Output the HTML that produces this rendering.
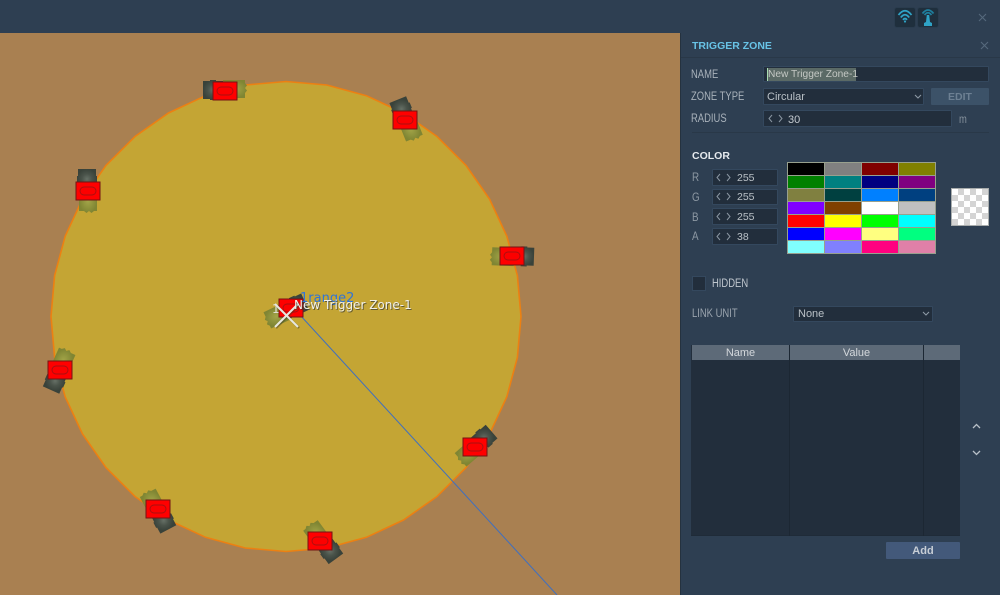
<!DOCTYPE html>
<html>
<head>
<meta charset="utf-8">
<style>
html,body{margin:0;padding:0;background:#2e3f52}
body{width:1000px;height:595px;overflow:hidden;position:relative;font-family:"Liberation Sans",sans-serif;font-size:11px;color:#b4bcc4}
#w{position:absolute;left:0;top:0;width:1000px;height:595px;overflow:hidden;filter:blur(.35px)}
.a{position:absolute;white-space:nowrap}
.l{position:absolute;white-space:nowrap;font-size:11.500px;line-height:14px;color:#a9b2bb;transform:scaleX(.82);transform-origin:0 50%}
.box{position:absolute;box-sizing:border-box;background:#222e3c;border:1px solid #34485e;border-radius:1px;color:#b9c0c6;line-height:14px;font-size:11px;white-space:nowrap}
.n{position:absolute;left:737px;line-height:14px;color:#b9c0c6;font-size:10.500px;white-space:nowrap}
.sw{position:absolute;left:787px;top:162px;width:149px;height:92px;background:#98a08e;display:grid;grid-template-columns:repeat(4,36px);grid-template-rows:repeat(7,12px);gap:1px;padding:1px;box-sizing:border-box}
svg{position:absolute}
</style>
</head>
<body>
<div id="w">
<div class="a" style="left:0;top:0;width:1000px;height:33px;background:#2e3f52"></div>

<svg style="left:0;top:33px" width="680" height="562" viewBox="0 33 680 562">
<defs>
<radialGradient id="o"><stop offset="0" stop-color="#a3a548"/><stop offset="1" stop-color="#7f8533"/></radialGradient>
<radialGradient id="d"><stop offset="0" stop-color="#667066"/><stop offset=".5" stop-color="#4a534a"/><stop offset="1" stop-color="#39423a"/></radialGradient>
<g id="t">
<path d="M-22-9h7v-1h6v1h7v18h-7v1h-6v-1h-7z" fill="url(#d)"/>
<path d="M-2-10H20v3l2 2.500-2 2.500 2 2.500-2 2.500v5H-2z" fill="url(#o)"/>
</g>
<g id="m">
<rect x="-12" y="-9" width="24" height="18" fill="#ff0000" stroke="#741414" stroke-width="1"/>
<rect x="-8" y="-4" width="16" height="8" rx="4" fill="#fc0000" stroke="#a81010" stroke-width=".9"/>
</g>
</defs>
<rect x="0" y="33" width="680" height="562" fill="#a98051"/>
<polygon points="521,316.5 517.4,357.3 506.8,396.9 489.5,434 466,467.6 437,496.5 403.500,520 366.4,537.3 326.8,548 286,551.5 245.2,548 205.6,537.3 168.5,520 135,496.5 106,467.6 82.5,434 65.2,396.9 54.6,357.3 51,316.5 54.6,275.7 65.2,236.1 82.5,199 106,165.4 135,136.5 168.5,113 205.6,95.7 245.2,85 286,81.5 326.8,85 366.4,95.7 403.500,113 437,136.5 466,165.4 489.5,199 506.8,236.1 517.4,275.7" fill="#c4a534" stroke="#ec8012" stroke-width="1.600"/>
<use href="#t" transform="translate(225,90) rotate(0)"/>
<use href="#t" transform="translate(406,120) rotate(68)"/>
<use href="#t" transform="translate(87,191) rotate(90)"/>
<use href="#t" transform="translate(512,256) rotate(182)"/>
<use href="#t" transform="translate(60,370) rotate(-66)"/>
<use href="#t" transform="translate(475,446) rotate(139)"/>
<use href="#t" transform="translate(158,510) rotate(242)"/>
<use href="#t" transform="translate(323,541) rotate(234)"/>
<use href="#t" transform="translate(285,311) rotate(155)"/>
<line x1="300" y1="315" x2="557" y2="595" stroke="#3f6fc0" stroke-width="1"/>
<use href="#m" transform="translate(225,91)"/>
<use href="#m" transform="translate(405,120)"/>
<use href="#m" transform="translate(88,191)"/>
<use href="#m" transform="translate(512,256)"/>
<use href="#m" transform="translate(60,370)"/>
<use href="#m" transform="translate(475,447)"/>
<use href="#m" transform="translate(158,509)"/>
<use href="#m" transform="translate(320,541)"/>
<use href="#m" transform="translate(291,308)"/>
<text x="300" y="302" font-family="DejaVu Sans" font-size="13" fill="#2f74d8">1range2</text>
<text x="272" y="313" font-family="DejaVu Sans" font-size="12" fill="#e0e0d0">1</text>
<g stroke="#3a3a20" stroke-opacity=".45" stroke-width="2.4"><line x1="276" y1="305" x2="299" y2="328"/><line x1="299" y1="305" x2="276" y2="328"/></g>
<g stroke="#e8e8e0" stroke-width="2"><line x1="275" y1="304" x2="298" y2="327"/><line x1="298" y1="304" x2="275" y2="327"/></g>
<text x="295" y="310" font-family="DejaVu Sans" font-size="12" fill="#3a3a30" fill-opacity=".7">New Trigger Zone-1</text>
<text x="294" y="309" font-family="DejaVu Sans" font-size="12" fill="#f0f0ea">New Trigger Zone-1</text>
</svg>

<!-- panel -->
<div class="a" style="left:680px;top:33px;width:320px;height:562px;background:#2e3f52;border-left:1px solid #25323f;box-sizing:border-box"></div>
<div class="a" style="left:681px;top:57px;width:319px;height:1px;background:#293848"></div>

<!-- top icons -->
<div class="a" style="left:894px;top:7px;width:22px;height:21px;background:#1f2f3d;border:1px solid #2a3c4e;box-sizing:border-box;border-radius:3px"></div>
<div class="a" style="left:917px;top:7px;width:22px;height:21px;background:#1f2f3d;border:1px solid #2a3c4e;box-sizing:border-box;border-radius:3px"></div>
<svg style="left:894px;top:7px" width="45" height="21" viewBox="0 0 45 21" fill="none" stroke="#2fa3c6" stroke-width="1.800">
<path d="M4.500 8Q11-.5 17.500 8"/><path d="M6.800 10.500Q11 5 15.200 10.500"/><path d="M9 12.800Q11 10.300 13 12.800"/><circle cx="11" cy="14.500" r="1.100" fill="#2fa3c6" stroke="none"/>
<path d="M28.500 6.500Q34-.5 39.500 6.500" stroke="#1f7f9e"/><path d="M30.500 8Q34 3.500 37.500 8" stroke="#1f7f9e"/>
<path d="M32.800 8h2.400l.8 7 2 1v3h-8v-3l2-1z" fill="#2fa3c6" stroke="none"/>
</svg>
<svg style="left:977px;top:12px" width="11" height="11" viewBox="0 0 11 11" stroke="#55697c" stroke-width="1.100"><path d="M2 2l7 7M9 2l-7 7"/></svg>
<svg style="left:979px;top:40px" width="11" height="11" viewBox="0 0 11 11" stroke="#55697c" stroke-width="1.100"><path d="M2 2l7 7M9 2l-7 7"/></svg>

<div class="a" style="left:692px;top:39px;font-size:10.500px;line-height:14px;font-weight:bold;color:#68c3e6">TRIGGER ZONE</div>

<div class="l" style="left:691px;top:68px">NAME</div>
<div class="box" style="left:763px;top:66px;width:226px;height:16px"></div>
<div class="a" style="left:767px;top:68px;width:89px;height:13px;background:#5b6a66"></div>
<div class="a" style="left:767px;top:68px;width:1px;height:13px;background:#a8dcb0"></div>
<div class="a" style="left:768px;top:68px;line-height:14px;color:#c4c8c4;font-size:10.200px">New Trigger Zone-1</div>

<div class="l" style="left:691px;top:90px">ZONE TYPE</div>
<div class="box" style="left:763px;top:88px;width:161px;height:17px;padding:1px 0 0 3px">Circular</div>
<svg style="left:913px;top:93px" width="10" height="7" viewBox="0 0 10 7" fill="none" stroke="#8d99a5" stroke-width="1.100"><path d="M2 2l3 3 3-3"/></svg>
<div class="a" style="left:931px;top:88px;width:58px;height:17px;background:#3c5268;border-radius:1px;text-align:center;line-height:18px;font-size:10.500px;font-weight:bold;color:#6d8093">EDIT</div>

<div class="l" style="left:691px;top:112px">RADIUS</div>
<div class="box" style="left:763px;top:110px;width:189px;height:17px"></div>
<svg style="left:766px;top:114px" width="20" height="9" viewBox="0 0 20 9" fill="none" stroke="#8a96a2"><path d="M6 1L3 4.500 6 8M13 1l3 3.500L13 8"/></svg>
<div class="a" style="left:788px;top:113px;line-height:14px;color:#c4cad0">30</div>
<div class="l" style="left:959px;top:113px;color:#85919c">m</div>
<div class="a" style="left:692px;top:132px;width:297px;height:1px;background:#293848"></div>

<div class="a" style="left:692px;top:149px;font-weight:bold;line-height:14px;color:#e6eaee;font-size:10.500px">COLOR</div>

<div class="l" style="left:692px;top:170px;font-size:12px;color:#8e99a4">R</div>
<div class="box" style="left:712px;top:169px;width:66px;height:17px"></div>
<svg style="left:714px;top:173px" width="20" height="9" viewBox="0 0 20 9" fill="none" stroke="#8a96a2"><path d="M6 1L3 4.500 6 8M13 1l3 3.500L13 8"/></svg>
<div class="n" style="top:171px">255</div>

<div class="l" style="left:692px;top:190px;font-size:12px;color:#8e99a4">G</div>
<div class="box" style="left:712px;top:189px;width:66px;height:16px"></div>
<svg style="left:714px;top:192px" width="20" height="9" viewBox="0 0 20 9" fill="none" stroke="#8a96a2"><path d="M6 1L3 4.500 6 8M13 1l3 3.500L13 8"/></svg>
<div class="n" style="top:190px">255</div>

<div class="l" style="left:692px;top:210px;font-size:12px;color:#8e99a4">B</div>
<div class="box" style="left:712px;top:208px;width:66px;height:17px"></div>
<svg style="left:714px;top:212px" width="20" height="9" viewBox="0 0 20 9" fill="none" stroke="#8a96a2"><path d="M6 1L3 4.500 6 8M13 1l3 3.500L13 8"/></svg>
<div class="n" style="top:210px">255</div>

<div class="l" style="left:692px;top:229px;font-size:12px;color:#8e99a4">A</div>
<div class="box" style="left:712px;top:228px;width:66px;height:17px"></div>
<svg style="left:714px;top:232px" width="20" height="9" viewBox="0 0 20 9" fill="none" stroke="#8a96a2"><path d="M6 1L3 4.500 6 8M13 1l3 3.500L13 8"/></svg>
<div class="n" style="top:230px">38</div>

<div class="sw">
<div style="background:#000"></div><div style="background:#808080"></div><div style="background:#800000"></div><div style="background:#808000"></div>
<div style="background:#008000"></div><div style="background:#008080"></div><div style="background:#000080"></div><div style="background:#800080"></div>
<div style="background:#808040"></div><div style="background:#004040"></div><div style="background:#0080ff"></div><div style="background:#004080"></div>
<div style="background:#8000ff"></div><div style="background:#804000"></div><div style="background:#fff"></div><div style="background:#c0c0c0"></div>
<div style="background:#f00"></div><div style="background:#ff0"></div><div style="background:#0f0"></div><div style="background:#0ff"></div>
<div style="background:#00f"></div><div style="background:#f0f"></div><div style="background:#ffff80"></div><div style="background:#00ff80"></div>
<div style="background:#80ffff"></div><div style="background:#8080ff"></div><div style="background:#ff0080"></div><div style="background:#e080a8"></div>
</div>

<svg style="left:951px;top:188px" width="38" height="38" viewBox="0 0 38 38">
<rect width="38" height="38" fill="#a8acac"/>
<rect x="1" y="1" width="36" height="36" fill="#fff"/>
<path d="M7 1h6v6H7zM19 1h6v6h-6zM31 1h6v6h-6zM1 7h6v6H1zM13 7h6v6h-6zM25 7h6v6h-6zM7 13h6v6H7zM19 13h6v6h-6zM31 13h6v6h-6zM1 19h6v6H1zM13 19h6v6h-6zM25 19h6v6h-6zM7 25h6v6H7zM19 25h6v6h-6zM31 25h6v6h-6zM1 31h6v6H1zM13 31h6v6h-6zM25 31h6v6h-6z" fill="#d4d4d4"/>
</svg>

<div class="a" style="left:692px;top:276px;width:14px;height:15px;box-sizing:border-box;background:#222e3c;border:1px solid #34485e"></div>
<div class="l" style="left:712px;top:277px;color:#c0c7ce">HIDDEN</div>

<div class="l" style="left:692px;top:307px;color:#9aa4ae">LINK UNIT</div>
<div class="box" style="left:793px;top:306px;width:140px;height:16px;padding:0 0 0 4px">None</div>
<svg style="left:921px;top:310px" width="10" height="7" viewBox="0 0 10 7" fill="none" stroke="#8d99a5" stroke-width="1.100"><path d="M2 2l3 3 3-3"/></svg>

<div class="a" style="left:691px;top:345px;width:269px;height:191px;background:#222e3c;border-bottom:1px solid #1f2b38;box-sizing:border-box"></div>
<div class="a" style="left:692px;top:345px;width:268px;height:15px;background:#5d6a78"></div>
<div class="a" style="left:789px;top:345px;width:1px;height:191px;background:#1c2733"></div>
<div class="a" style="left:923px;top:345px;width:1px;height:191px;background:#1c2733"></div>
<div class="a" style="left:692px;top:346px;width:97px;text-align:center;line-height:14px;color:#d4d8dc">Name</div>
<div class="a" style="left:790px;top:346px;width:133px;text-align:center;line-height:14px;color:#d4d8dc">Value</div>

<svg style="left:970px;top:420px" width="13" height="38" viewBox="0 0 13 38" fill="none" stroke="#b8c0c8" stroke-width="1.300"><path d="M3 8l3.500-3.500L10 8M3 31l3.500 3.500L10 31"/></svg>

<div class="a" style="left:886px;top:542px;width:74px;height:17px;background:#43597a;border-radius:1px;text-align:center;line-height:19px;font-weight:bold;color:#c8ced6;font-size:11px">Add</div>
</div>
</body>
</html>
